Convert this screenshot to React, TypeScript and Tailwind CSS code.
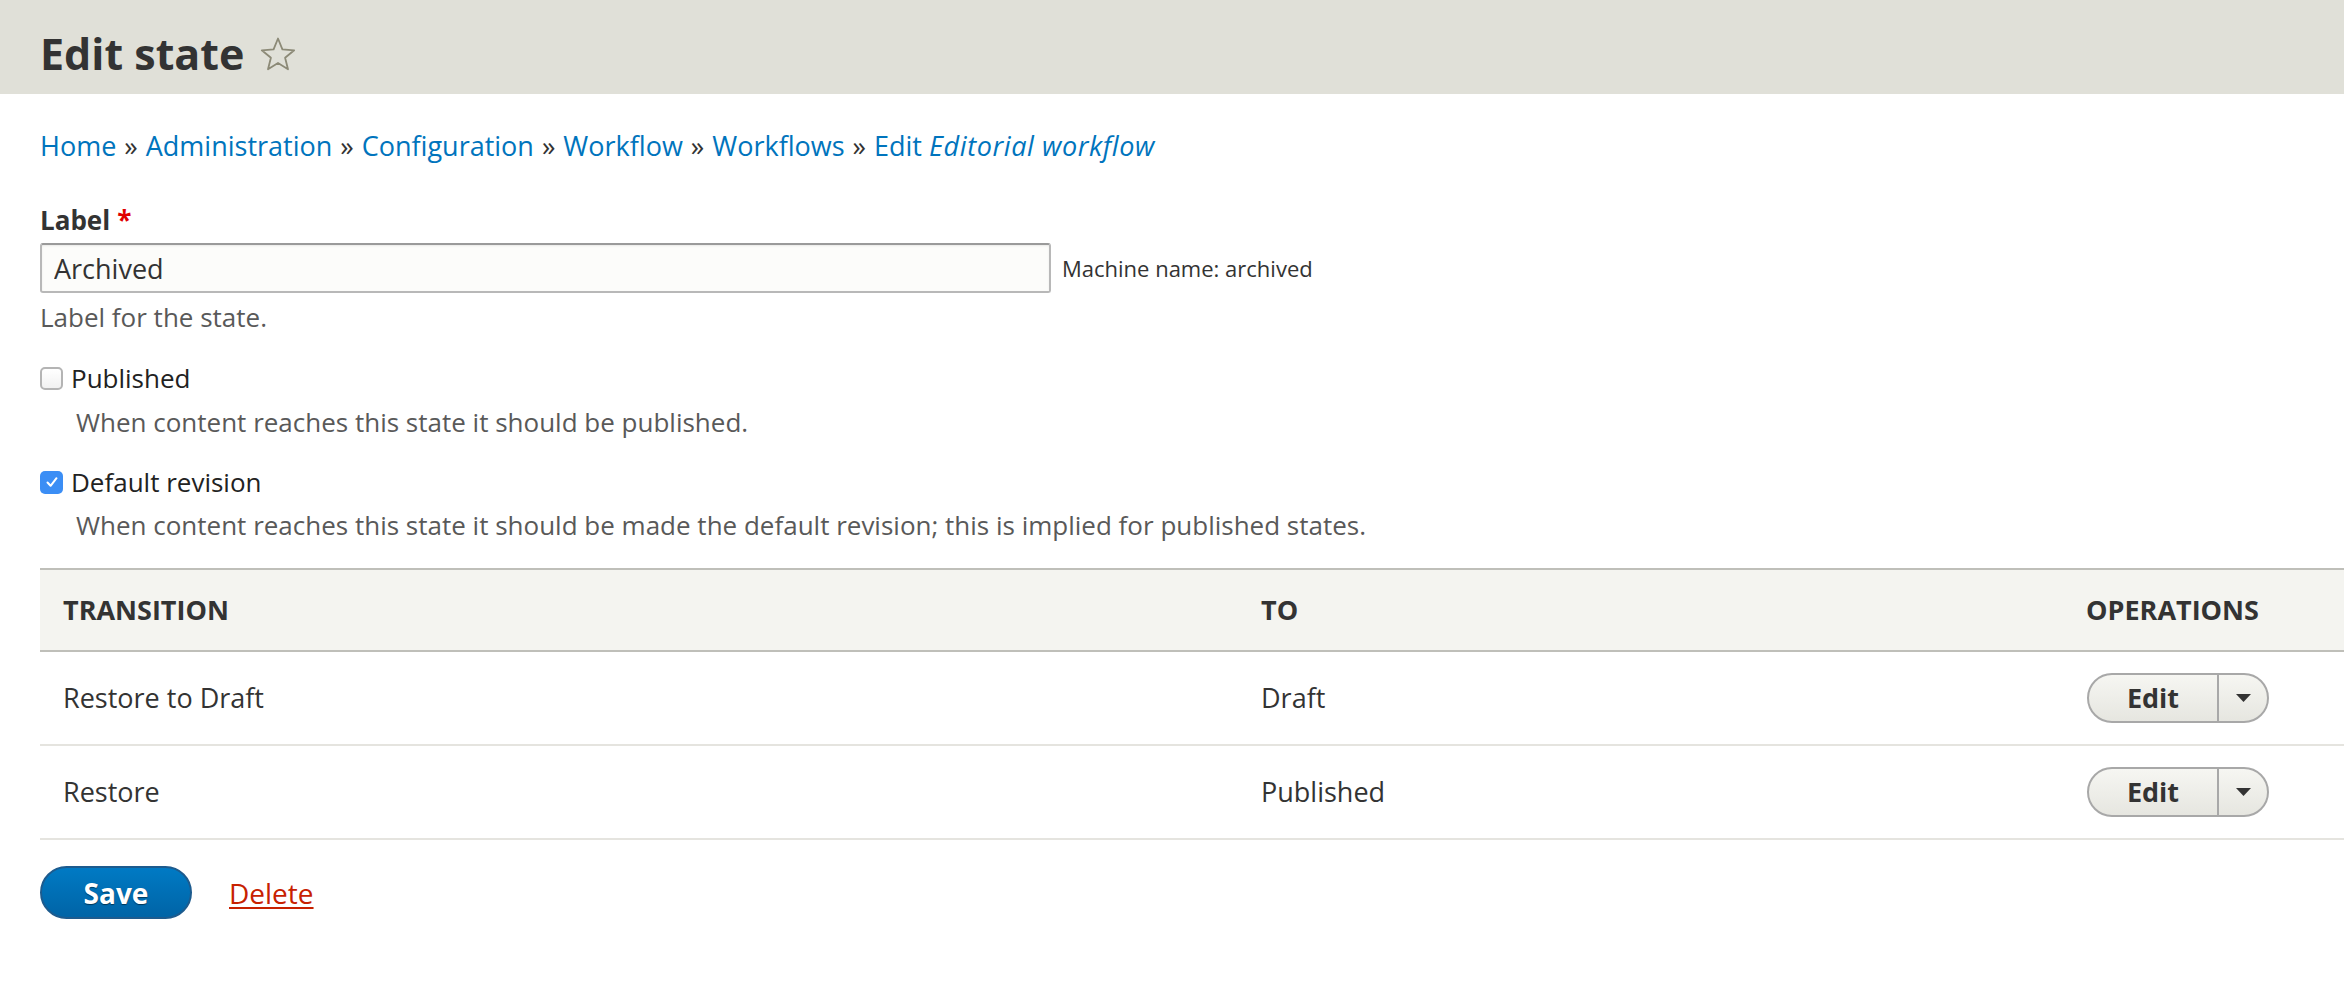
import { Fragment } from 'react';

const CRUMBS = ['Home', 'Administration', 'Configuration', 'Workflow', 'Workflows'];

const TRANSITIONS = [
  { label: 'Restore to Draft', to: 'Draft' },
  { label: 'Restore', to: 'Published' },
];

function StarIcon() {
  return (
    <svg width="36" height="36" viewBox="0 0 36 36" className="ml-[16px] shrink-0">
      <polygon
        points="18,2.5 22.4,13.4 34.2,14.3 25.1,21.8 28,33.3 18,27 8,33.3 10.9,21.8 1.8,14.3 13.6,13.4"
        fill="none"
        stroke="#8c8a77"
        strokeWidth="1.8"
        strokeLinejoin="round"
      />
    </svg>
  );
}

function Checkbox({ checked }: { checked: boolean }) {
  if (checked) {
    return (
      <span className="flex h-[23px] w-[23px] items-center justify-center rounded-[5px] bg-[#3b8ef5]">
        <svg width="14" height="14" viewBox="0 0 14 14">
          <path d="M2.5 7.5 L5.6 10.8 L11.5 3.2" fill="none" stroke="#fff" strokeWidth="2" strokeLinecap="round" strokeLinejoin="round" />
        </svg>
      </span>
    );
  }
  return <span className="h-[23px] w-[23px] rounded-[5px] border-2 border-[#b4b4b4] bg-linear-to-b from-white to-[#f1f1f1]" />;
}

function DropButton() {
  return (
    <div className="flex h-[50px] w-[182px] overflow-hidden rounded-full border-2 border-[#a8a8a8] bg-linear-to-b from-[#f6f6f2] to-[#e6e6e0]">
      <span className="flex w-[128px] items-center justify-center text-[27px] font-bold text-[#333]">Edit</span>
      <span className="flex flex-1 items-center justify-center border-l-2 border-[#a8a8a8]">
        <svg width="15" height="8" viewBox="0 0 15 8">
          <polygon points="0,0 15,0 7.5,8" fill="#333" />
        </svg>
      </span>
    </div>
  );
}

export default function App() {
  return (
    <div className="min-h-screen bg-white font-['Open_Sans',sans-serif] text-[#333]">
      <header className="h-[94px] bg-[#e0e0d8] pl-[40px] pt-[32px]">
        <h1 className="flex items-center text-[43px] font-bold leading-[44px] text-[#333]">
          Edit state
          <StarIcon />
        </h1>
      </header>

      <main className="pl-[40px]">
        {/* Breadcrumb */}
        <nav className="mt-[34px] text-[27px] leading-[36px] text-[#333]">
          {CRUMBS.map((c) => (
            <Fragment key={c}>
              <a className="text-[#0074bd]">{c}</a>
              <span className="mx-[1px]"> » </span>
            </Fragment>
          ))}
          <a className="text-[#0074bd]">
            Edit <em className="tracking-[0.6px]">Editorial workflow</em>
          </a>
        </nav>

        {/* Label field */}
        <label className="mt-[38px] flex text-[26px] font-bold leading-[36px] text-[#333]">
          Label<span className="ml-[7px] text-[#e00000]">*</span>
        </label>
        <div className="mt-[5px] flex items-center">
          <input
            readOnly
            value="Archived"
            className="h-[50px] w-[1011px] rounded-[3px] border-2 border-[#b8b8b8] border-t-[#9a9a9a] bg-[#fcfcfa] px-[12px] text-[27px] text-[#333] shadow-[inset_0_1px_2px_rgba(0,0,0,0.08)] outline-none"
          />
          <span className="ml-[11px] text-[22px] leading-[36px] text-[#333]">Machine name: archived</span>
        </div>
        <p className="mt-[6px] text-[26px] leading-[36px] text-[#595959]">Label for the state.</p>

        {/* Checkboxes */}
        <div className="mt-[25px] flex items-center leading-[36px]">
          <Checkbox checked={false} />
          <span className="ml-[8px] text-[26px] text-[#222]">Published</span>
        </div>
        <p className="ml-[36px] mt-[8px] text-[26px] leading-[36px] text-[#595959]">
          When content reaches this state it should be published.
        </p>

        <div className="mt-[24px] flex items-center leading-[36px]">
          <Checkbox checked />
          <span className="ml-[8px] text-[26px] text-[#222]">Default revision</span>
        </div>
        <p className="ml-[36px] mt-[7px] text-[26px] leading-[36px] text-[#595959]">
          When content reaches this state it should be made the default revision; this is implied for published states.
        </p>

        {/* Transitions table */}
        <div className="mt-[25px]">
          <div className="grid h-[84px] grid-cols-[1198px_825px_1fr] items-center border-y-2 border-[#bfbfb9] bg-[#f4f4f0] text-[27px] font-bold text-[#333]">
            <span className="pl-[23px]">TRANSITION</span>
            <span className="pl-[23px]">TO</span>
            <span className="pl-[23px]">OPERATIONS</span>
          </div>
          {TRANSITIONS.map((t) => (
            <div
              key={t.label}
              className="grid h-[94px] grid-cols-[1198px_825px_1fr] items-center border-b-2 border-[#e5e4df] text-[27px] text-[#333]"
            >
              <span className="pl-[23px]">{t.label}</span>
              <span className="pl-[23px]">{t.to}</span>
              <div className="pl-[24px]">
                <DropButton />
              </div>
            </div>
          ))}
        </div>

        {/* Actions */}
        <div className="mt-[26px] flex items-center">
          <button className="h-[53px] w-[152px] rounded-full border-2 border-[#1d5b8e] bg-linear-to-b from-[#007ac4] to-[#0064a6] text-[28px] font-bold text-white [text-shadow:0_1px_1px_rgba(0,0,0,0.5)]">
            Save
          </button>
          <a className="ml-[37px] text-[28px] text-[#c72100] underline decoration-2 underline-offset-[3px]">Delete</a>
        </div>
      </main>
    </div>
  );
}
